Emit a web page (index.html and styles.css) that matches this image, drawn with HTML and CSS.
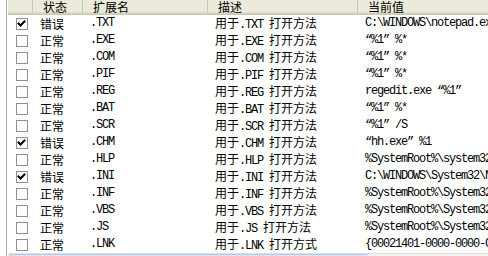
FILE: index.html
```html
<!DOCTYPE html>
<html>
<head>
<meta charset="utf-8">
<link rel="stylesheet" href="styles.css">
</head>
<body>
<div class="lv">
  <div class="hdr">
    <span class="h"></span>
    <span class="h">状态</span>
    <span class="h">扩展名</span>
    <span class="h">描述</span>
    <span class="h last">当前值</span>
  </div>
  <div class="rows">
    <div class="row"><span class="c0"><span class="cb"><svg viewBox="0 0 10 10" class="ck"><polyline points="1.5,4.5 3.5,6.5 7.5,2.5"/></svg></span></span><span class="c">错误</span><span class="c m">.TXT</span><span class="c"><span>用于</span><span class="m">.TXT </span><span>打开方法</span></span><span class="c m">C:\WINDOWS\notepad.exe</span></div>
    <div class="row"><span class="c0"><span class="cb"></span></span><span class="c">正常</span><span class="c m">.EXE</span><span class="c"><span>用于</span><span class="m">.EXE </span><span>打开方法</span></span><span class="c m">“%1” %*</span></div>
    <div class="row"><span class="c0"><span class="cb"></span></span><span class="c">正常</span><span class="c m">.COM</span><span class="c"><span>用于</span><span class="m">.COM </span><span>打开方法</span></span><span class="c m">“%1” %*</span></div>
    <div class="row"><span class="c0"><span class="cb"></span></span><span class="c">正常</span><span class="c m">.PIF</span><span class="c"><span>用于</span><span class="m">.PIF </span><span>打开方法</span></span><span class="c m">“%1” %*</span></div>
    <div class="row"><span class="c0"><span class="cb"></span></span><span class="c">正常</span><span class="c m">.REG</span><span class="c"><span>用于</span><span class="m">.REG </span><span>打开方法</span></span><span class="c m">regedit.exe “%1”</span></div>
    <div class="row"><span class="c0"><span class="cb"></span></span><span class="c">正常</span><span class="c m">.BAT</span><span class="c"><span>用于</span><span class="m">.BAT </span><span>打开方法</span></span><span class="c m">“%1” %*</span></div>
    <div class="row"><span class="c0"><span class="cb"></span></span><span class="c">正常</span><span class="c m">.SCR</span><span class="c"><span>用于</span><span class="m">.SCR </span><span>打开方法</span></span><span class="c m">“%1” /S</span></div>
    <div class="row"><span class="c0"><span class="cb"><svg viewBox="0 0 10 10" class="ck"><polyline points="1.5,4.5 3.5,6.5 7.5,2.5"/></svg></span></span><span class="c">错误</span><span class="c m">.CHM</span><span class="c"><span>用于</span><span class="m">.CHM </span><span>打开方法</span></span><span class="c m">“hh.exe” %1</span></div>
    <div class="row"><span class="c0"><span class="cb"></span></span><span class="c">正常</span><span class="c m">.HLP</span><span class="c"><span>用于</span><span class="m">.HLP </span><span>打开方法</span></span><span class="c m">%SystemRoot%\system32\winhlp32.exe %1</span></div>
    <div class="row"><span class="c0"><span class="cb"><svg viewBox="0 0 10 10" class="ck"><polyline points="1.5,4.5 3.5,6.5 7.5,2.5"/></svg></span></span><span class="c">错误</span><span class="c m">.INI</span><span class="c"><span>用于</span><span class="m">.INI </span><span>打开方法</span></span><span class="c m">C:\WINDOWS\System32\NOTEPAD.EXE %1</span></div>
    <div class="row"><span class="c0"><span class="cb"></span></span><span class="c">正常</span><span class="c m">.INF</span><span class="c"><span>用于</span><span class="m">.INF </span><span>打开方法</span></span><span class="c m">%SystemRoot%\System32\rundll32.exe</span></div>
    <div class="row"><span class="c0"><span class="cb"></span></span><span class="c">正常</span><span class="c m">.VBS</span><span class="c"><span>用于</span><span class="m">.VBS </span><span>打开方法</span></span><span class="c m">%SystemRoot%\System32\WScript.exe "%1" %*</span></div>
    <div class="row"><span class="c0"><span class="cb"></span></span><span class="c">正常</span><span class="c m">.JS</span><span class="c"><span>用于</span><span class="m">.JS </span><span>打开方法</span></span><span class="c m">%SystemRoot%\System32\WScript.exe "%1" %*</span></div>
    <div class="row"><span class="c0"><span class="cb"></span></span><span class="c">正常</span><span class="c m">.LNK</span><span class="c"><span>用于</span><span class="m">.LNK </span><span>打开方式</span></span><span class="c m">{00021401-0000-0000-C000-000000000046}</span></div>
  </div>
  <div class="hscroll"><div class="thumb"></div></div>
</div>
</body>
</html>
```
FILE: styles.css
```css
html, body {
  margin: 0;
  padding: 0;
  background: #fff;
  overflow: hidden;
}
body {
  width: 488px;
  height: 256px;
  font-family: "Noto Sans CJK SC", sans-serif;
  font-size: 12px;
  color: #000;
}
.lv {
  margin-left: 6px;
  border-left: 1px solid #a7abb2;
  padding-left: 1px;
  display: flex;
  flex-direction: column;
  width: 481px;
  height: 256px;
  overflow: hidden;
}
.hdr {
  display: grid;
  grid-template-columns: 25px 50px 125px 150px 1fr;
  height: 15px;
  flex: none;
  background: #ebeadb;
  box-shadow: inset 0 -1px #cbc7b8, inset 0 -2px #d6d2c2, inset 0 -3px #e2dec8;
}
.h {
  padding-left: 10px;
  line-height: 13px;
  border-right: 1px solid #c9c6b5;
  white-space: nowrap;
  height: 13px;
}
.h.last {
  border-right: none;
}
.rows {
  display: flex;
  flex-direction: column;
  flex: none;
}
.row {
  display: grid;
  grid-template-columns: 25px 50px 125px 150px 1fr;
  height: 17px;
  align-items: center;
}
.c0 {
  display: flex;
  align-items: center;
  padding-left: 8px;
}
.cb {
  box-sizing: border-box;
  width: 12px;
  height: 12px;
  border: 1px solid #8e8f90;
  background: #fff;
  display: flex;
  align-items: center;
  justify-content: center;
}
.ck {
  width: 10px;
  height: 10px;
  fill: none;
  stroke: #000;
  stroke-width: 2;
  stroke-linecap: square;
}
.c {
  padding-left: 7px;
  white-space: nowrap;
  overflow: hidden;
  line-height: 17px;
}
.m {
  font-family: "Liberation Mono", "Noto Sans CJK SC", monospace;
  font-size: 12px;
  letter-spacing: -1.2px;
}
.hscroll {
  flex: 1;
  background: #f4f3ee;
  border-top: 1px solid #e4e2d8;
  display: flex;
}
.thumb {
  width: 358px;
  margin-left: 1px;
  background: #dce5f6;
  border-top: 1px solid #b8c8ea;
  border-left: 1px solid #b8c8ea;
  border-radius: 2px 0 0 0;
}
```
